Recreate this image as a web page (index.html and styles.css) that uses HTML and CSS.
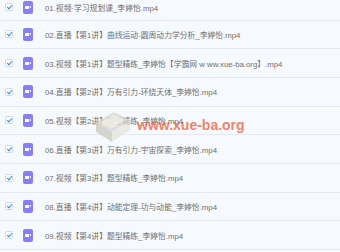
FILE: index.html
```html
<!DOCTYPE html>
<html>
<head>
<meta charset="utf-8">
<link rel="stylesheet" href="styles.css">
</head>
<body>
<div class="list">
  <div class="row first"><span class="cb"></span><span class="vi"></span><span class="name">01.视频·学习规划课_李婷怡.mp4</span></div>
  <div class="row"><span class="cb"></span><span class="vi"></span><span class="name">02.直播【第1讲】曲线运动-圆周动力学分析_李婷怡.mp4</span></div>
  <div class="row"><span class="cb"></span><span class="vi"></span><span class="name">03.视频【第1讲】题型精练_李婷怡【学霸网 w ww.xue-ba.org】.mp4</span></div>
  <div class="row"><span class="cb"></span><span class="vi"></span><span class="name">04.直播【第2讲】万有引力-环绕天体_李婷怡.mp4</span></div>
  <div class="row"><span class="cb"></span><span class="vi"></span><span class="name">05.视频【第2讲】题型精练_李婷怡.mp4</span></div>
  <div class="row"><span class="cb"></span><span class="vi"></span><span class="name">06.直播【第3讲】万有引力-宇宙探索_李婷怡.mp4</span></div>
  <div class="row"><span class="cb"></span><span class="vi"></span><span class="name">07.视频【第3讲】题型精练_李婷怡.mp4</span></div>
  <div class="row"><span class="cb"></span><span class="vi"></span><span class="name">08.直播【第4讲】动能定理-功与动能_李婷怡.mp4</span></div>
  <div class="row"><span class="cb"></span><span class="vi"></span><span class="name">09.视频【第4讲】题型精练_李婷怡.mp4</span></div>
  <svg class="wm-icon" width="40" height="36" viewBox="0 0 40 36">
    <polygon points="4,14 22,4 38,12 20,24" fill="#d9d6cf" opacity="0.75"/>
    <polygon points="4,14 20,24 20,34 4,24" fill="#c9c4ba" opacity="0.7"/>
    <polygon points="20,24 38,12 38,22 20,34" fill="#e6e2d8" opacity="0.7"/>
    <polygon points="8,15 22,7 33,12 20,20" fill="#f2efe6" opacity="0.8"/>
  </svg>
  <div class="wm-text">www.xue-ba.org</div>
</div>
</body>
</html>
```
FILE: styles.css
```css
html, body {
  margin: 0;
  padding: 0;
  background: #f6f9fd;
}
.list {
  position: relative;
  width: 340px;
  height: 252px;
  overflow: hidden;
}
.row {
  display: flex;
  align-items: center;
  height: 28.7px;
  box-sizing: border-box;
  border-bottom: 1px solid #e2eaf2;
  padding-left: 5px;
}
.row.first {
  height: 20.5px;
  padding-bottom: 5px;
}
.cb {
  position: relative;
  width: 8px;
  height: 8px;
  box-sizing: border-box;
  background: #fff;
  border: 1px solid #cfd9e4;
  border-radius: 1.5px;
  flex: none;
}
.cb::after {
  content: "";
  position: absolute;
  left: 1.5px;
  top: 0px;
  width: 2px;
  height: 4px;
  border-right: 1.4px solid #2f8cf0;
  border-bottom: 1.4px solid #2f8cf0;
  transform: rotate(40deg);
}
.vi {
  position: relative;
  width: 10px;
  height: 13px;
  margin-left: 10px;
  border-radius: 2px;
  background: #8a7ff2;
  flex: none;
}
.vi::before {
  content: "";
  position: absolute;
  left: 2px;
  top: 5px;
  width: 3.5px;
  height: 3px;
  background: #fff;
  border-radius: 0.5px;
}
.vi::after {
  content: "";
  position: absolute;
  left: 5.5px;
  top: 5px;
  width: 0;
  height: 0;
  border-top: 1.5px solid transparent;
  border-bottom: 1.5px solid transparent;
  border-right: 2.5px solid #fff;
}
.name {
  margin-left: 12px;
  font-family: "Liberation Sans", "Noto Sans CJK SC", sans-serif;
  font-size: 7.8px;
  color: #707070;
  white-space: nowrap;
}
.wm-icon {
  position: absolute;
  left: 92px;
  top: 108px;
}
.wm-text {
  position: absolute;
  left: 137px;
  top: 117px;
  font-family: "Liberation Sans", Arial, sans-serif;
  font-weight: bold;
  font-size: 14px;
  color: rgba(232, 92, 58, 0.75);
  white-space: nowrap;
}
```
